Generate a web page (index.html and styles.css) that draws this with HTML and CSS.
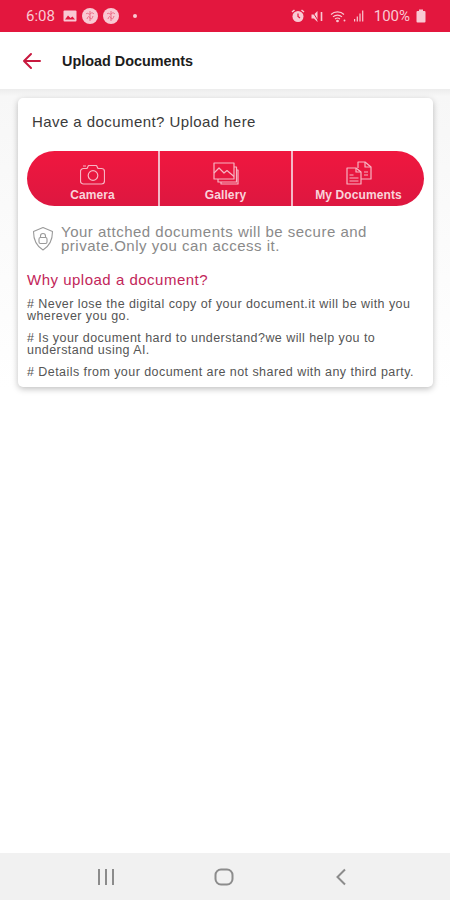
FILE: index.html
```html
<!DOCTYPE html>
<html lang="en">
<head>
  <meta charset="UTF-8">
  <meta name="viewport" content="width=device-width, initial-scale=1.0">
  <title>Upload Documents</title>
  <link rel="stylesheet" href="styles.css">
</head>
<body>
  <div class="status-bar">
    <div class="status-left">
      <span class="time">6:08</span>
      <svg width="14" height="12" viewBox="0 0 14 12">
        <rect x="0.500" y="0.500" width="13" height="11" rx="1" fill="#f9c9d3"/>
        <path d="M2 9.500l3-4 2.500 2.500 2-1.500 2.500 3z" fill="#e3173e"/>
      </svg>
      <svg width="16" height="16" viewBox="0 0 16 16">
        <circle cx="8" cy="8" r="8" fill="#f9c9d3"/>
        <path d="M4 6c2-2 3 1 4 0s2-2 4 0M5 11c1-3 2-3 3-1s2 1 3-2M8 3v10" stroke="#e9607c" stroke-width="0.900" fill="none"/>
      </svg>
      <svg width="16" height="16" viewBox="0 0 16 16">
        <circle cx="8" cy="8" r="8" fill="#f9c9d3"/>
        <path d="M4 6c2-2 3 1 4 0s2-2 4 0M5 11c1-3 2-3 3-1s2 1 3-2M8 3v10" stroke="#e9607c" stroke-width="0.900" fill="none"/>
      </svg>
      <span class="dot"></span>
    </div>
    <div class="status-right">
      <svg width="14" height="14" viewBox="0 0 14 14">
        <circle cx="7" cy="7.500" r="5.500" fill="#f9c9d3"/>
        <path d="M1 3l2.500-2M13 3l-2.500-2" stroke="#f9c9d3" stroke-width="1.600"/>
        <path d="M7 4.500v3l2 1.500" stroke="#e3173e" stroke-width="1.200" fill="none"/>
      </svg>
      <svg width="13" height="13" viewBox="0 0 13 13">
        <path d="M0.500 4.500h2.500l3.500-3.500v11l-3.500-3.500h-2.500z" fill="#f9c9d3"/>
        <path d="M1 1l7 11" stroke="#e3173e" stroke-width="1"/>
        <path d="M10.500 2v9" stroke="#f9c9d3" stroke-width="1.600"/>
      </svg>
      <svg width="16" height="13" viewBox="0 0 16 13" fill="none" stroke="#f9c9d3" stroke-width="1.100">
        <path d="M1 4.500c3.500-3.500 9.500-3.500 13 0"/>
        <path d="M3 6.800c2.500-2.300 6.500-2.300 9 0"/>
        <path d="M5 9c1.500-1.200 3.500-1.200 5 0"/>
        <circle cx="7.500" cy="11" r="0.800" fill="#f9c9d3"/>
        <circle cx="14.500" cy="10.500" r="0.400" fill="#f9c9d3"/>
      </svg>
      <svg class="signal" width="10" height="12" viewBox="0 0 10 12" fill="#f9c9d3">
        <rect x="0" y="9" width="1.200" height="2.500"/>
        <rect x="2.700" y="6.500" width="1.200" height="5"/>
        <rect x="5.400" y="3.500" width="1.200" height="8"/>
        <rect x="8.100" y="0.500" width="1.200" height="11"/>
      </svg>
      <span class="battery-text">100%</span>
      <svg width="10" height="14" viewBox="0 0 10 14">
        <path d="M3 0.500h4v1.500h1.500a1 1 0 0 1 1 1v9.500a1 1 0 0 1-1 1h-7a1 1 0 0 1-1-1v-9.500a1 1 0 0 1 1-1h1.500z" fill="#f9c9d3"/>
      </svg>
    </div>
  </div>

  <div class="app-bar">
    <svg class="back-arrow" width="20" height="18" viewBox="0 0 20 18" fill="none" stroke="#c8193f" stroke-width="2" stroke-linecap="round" stroke-linejoin="round">
      <path d="M18 9H2M9 2L2 9l7 7"/>
    </svg>
    <h1>Upload Documents</h1>
  </div>

  <div class="content">
    <div class="card">
      <p class="card-title">Have a document? Upload here</p>

      <div class="upload-buttons">
        <div class="upload-btn">
          <svg width="25" height="21" viewBox="0 0 25 21" fill="none" stroke="#f7b4c2" stroke-width="1.200" stroke-linejoin="round">
            <path d="M3.500 4.500h3.500l1.500-3h8l1.500 3h3.500a3 3 0 0 1 3 3v9.500a3 3 0 0 1-3 3h-18a3 3 0 0 1-3-3v-9.500a3 3 0 0 1 3-3z"/>
            <circle cx="13" cy="11.500" r="4.800"/>
            <path d="M3 2h3"/>
          </svg>
          <span>Camera</span>
        </div>
        <div class="upload-btn">
          <svg width="26" height="23" viewBox="0 0 26 23" fill="none" stroke="#f7b4c2" stroke-width="1.200" stroke-linejoin="round">
            <rect x="1" y="1" width="20" height="16"/>
            <path d="M21 5h2.500v15H5v-3"/>
            <path d="M23.500 8h1.500v14H8v-2"/>
            <path d="M1 11l5-5 5 5 3-2.500 7 6"/>
          </svg>
          <span>Gallery</span>
        </div>
        <div class="upload-btn">
          <svg width="26" height="24" viewBox="0 0 26 24" fill="none" stroke="#f7b4c2" stroke-width="1.200" stroke-linejoin="round">
            <path d="M1 7h9l5 4v12H1z"/>
            <path d="M10 7v4h5"/>
            <path d="M3.500 14h4M3.500 17h9M3.500 20h9"/>
            <path d="M12 7V1h7l6 5v12H15"/>
            <path d="M19 1v5h6"/>
            <path d="M18 11h4M18 14h4"/>
          </svg>
          <span>My Documents</span>
        </div>
      </div>

      <div class="secure-note">
        <svg width="22" height="26" viewBox="0 0 22 26" fill="none" stroke="#9a9a9a" stroke-width="1.100" stroke-linejoin="round">
          <path d="M11 1.500l9.500 4c0 8-2 14-9.500 18.500C3.500 19.500 1.500 13.500 1.500 5.500z"/>
          <rect x="7" y="11.500" width="8" height="6" rx="1.500"/>
          <path d="M8.500 11.500V10a2.500 2.500 0 0 1 5 0v1.500"/>
        </svg>
        <p>Your attched documents will be secure and private.Only you can access it.</p>
      </div>

      <h2 class="why-title">Why upload a document?</h2>
      <p class="why-item"># Never lose the digital copy of your document.it will be with you wherever you go.</p>
      <p class="why-item"># Is your document hard to understand?we will help you to understand using AI.</p>
      <p class="why-item"># Details from your document are not shared with any third party.</p>
    </div>
  </div>

  <div class="nav-bar">
    <svg width="18" height="16" viewBox="0 0 18 16" fill="#8c8c8c">
      <rect x="1" y="0" width="2" height="16"/>
      <rect x="8" y="0" width="2" height="16"/>
      <rect x="15" y="0" width="2" height="16"/>
    </svg>
    <svg width="20" height="18" viewBox="0 0 20 18" fill="none" stroke="#8c8c8c" stroke-width="2">
      <rect x="1.500" y="1.500" width="17" height="15" rx="5.500"/>
    </svg>
    <svg class="nav-back" width="12" height="18" viewBox="0 0 12 18" fill="none" stroke="#8c8c8c" stroke-width="2">
      <path d="M10 1.500L2.500 9l7.500 7.500"/>
    </svg>
  </div>
</body>
</html>
```

FILE: styles.css
```css
* {
  margin: 0;
  padding: 0;
  box-sizing: border-box;
}

body {
  width: 450px;
  height: 900px;
  display: flex;
  flex-direction: column;
  font-family: "Liberation Sans", Arial, sans-serif;
  background-color: #ffffff;
  overflow: hidden;
}

/* status bar */
.status-bar {
  height: 32px;
  flex-shrink: 0;
  display: flex;
  align-items: center;
  justify-content: space-between;
  padding: 0 24px 0 26px;
  background-color: #e3173e;
  color: #f9c9d3;
  font-family: Roboto, sans-serif;
  font-size: 15px;
}

.status-left,
.status-right {
  display: flex;
  align-items: center;
}

.status-left {
  gap: 5px;
}

.status-right {
  gap: 6px;
}

.time {
  margin-right: 3px;
}

.dot {
  width: 4px;
  height: 4px;
  margin-left: 9px;
  border-radius: 50%;
  background-color: #f9c9d3;
}

.signal {
  margin-left: 2px;
}

.battery-text {
  margin-left: 4px;
}

/* app bar */
.app-bar {
  height: 57px;
  flex-shrink: 0;
  display: flex;
  align-items: center;
  padding-left: 22px;
  background-color: #ffffff;
}

.back-arrow {
  margin-right: 20px;
}

.app-bar h1 {
  font-size: 14.4px;
  font-weight: 700;
  color: #1c1c1c;
}

/* content */
.content {
  flex: 1;
  padding: 9px 17px 0 18px;
  background: linear-gradient(#ececec, #f7f7f7 7px, #ffffff 300px);
}

.card {
  height: 289px;
  padding: 15px 9px 0;
  border-radius: 5px;
  background-color: #ffffff;
  box-shadow: 0 2px 6px rgba(0, 0, 0, 0.25);
}

.card-title {
  margin-left: 5px;
  font-size: 15px;
  letter-spacing: 0.43px;
  color: #3a3a3a;
}

.upload-buttons {
  display: flex;
  height: 55px;
  margin-top: 21px;
  border-radius: 28px;
  overflow: hidden;
  background: linear-gradient(#f0173f, #dd1740);
}

.upload-btn {
  flex: 1;
  display: flex;
  flex-direction: column;
  align-items: center;
  justify-content: flex-end;
  gap: 3px;
  padding-bottom: 4px;
  color: #f9d3da;
  font-size: 12px;
  font-weight: 700;
  letter-spacing: 0.1px;
  border-left: 2px solid #f3b8c6;
}

.upload-btn:first-child {
  border-left: none;
}

.secure-note {
  display: flex;
  align-items: center;
  gap: 7px;
  margin: 19px 0 0 5px;
  color: #8a8a8a;
  font-size: 15px;
  line-height: 14px;
  letter-spacing: 0.5px;
}

.secure-note svg {
  flex-shrink: 0;
}

.why-title {
  margin: 18px 0 3px;
  font-size: 15px;
  font-weight: 400;
  letter-spacing: 0.5px;
  color: #c2265a;
}

.why-item {
  margin-top: 11px;
  font-size: 12.5px;
  line-height: 11.5px;
  letter-spacing: 0.44px;
  color: #555555;
}

/* bottom navigation */
.nav-bar {
  height: 47px;
  flex-shrink: 0;
  display: flex;
  align-items: center;
  gap: 99px;
  padding-left: 97px;
  background-color: #f1f1f1;
}

.nav-back {
  margin-left: 2px;
}
```
